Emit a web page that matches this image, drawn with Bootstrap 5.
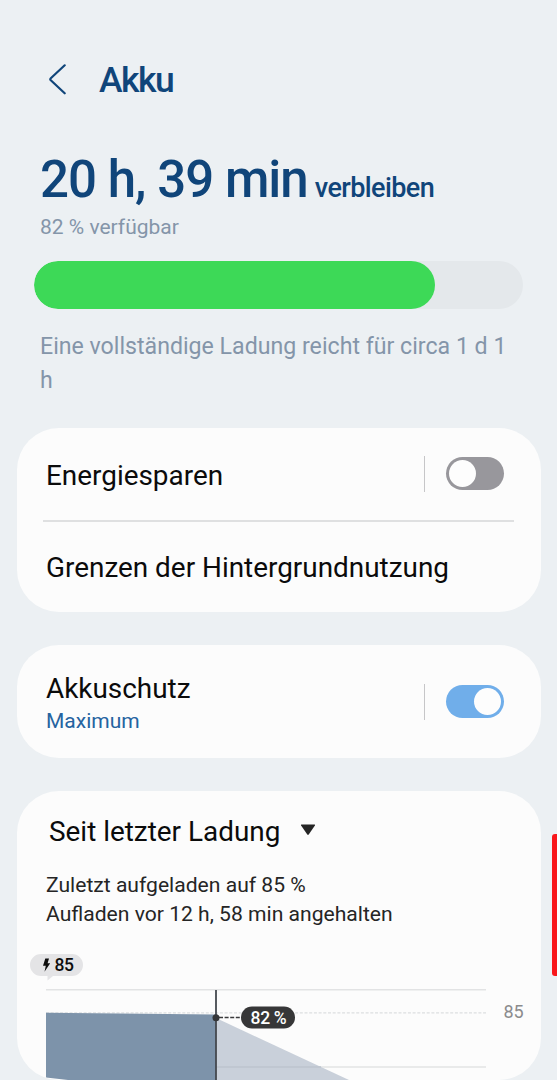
<!DOCTYPE html>
<html lang="de">
<head>
<meta charset="utf-8">
<meta name="viewport" content="width=device-width, initial-scale=1">
<title>Akku</title>
<link href="https://cdn.jsdelivr.net/npm/bootstrap@5.3.0/dist/css/bootstrap.min.css" rel="stylesheet">
<style>
body{background:#ecf0f3;font-family:Roboto,"Liberation Sans",sans-serif;color:#0b0b0b;height:1080px;overflow:hidden}
.navy{color:#10457a}
.slate{color:#8495a9}
.top-bar{height:152px;padding:8px 0 0 48px}
.page-title{font-size:35.5px;font-weight:500;letter-spacing:-1.5px;line-height:40px;margin-left:32px}
.summary{height:276px;padding-left:40px}
.remaining{font-size:51px;font-weight:500;line-height:56px;white-space:nowrap;height:62px;letter-spacing:-.98px}
.remaining span{font-size:27px;letter-spacing:-.6px;margin-left:7px}
.available{font-size:21px;line-height:26px}
.level{height:48px;width:489px;margin:21px 0 0 -6px;border-radius:24px;background:#e4e8eb}
.level .progress-bar{border-radius:24px;background:#3dd957}
.estimate{font-size:23.15px;line-height:34px;margin-top:21px;width:480px}
.panel{background:#fcfcfc;border:0;border-radius:42px;margin:0 16px 33px 17px;overflow:hidden}
.entry{padding:0 37px 0 29px}
.entry-title{font-size:27.9px;line-height:34px}
.rule{height:2px;background:#dfe0e1;margin:0 27px 0 26px}
.split{width:1px;height:36px;background:#c6c6c8;margin-right:21px}
.toggle{width:58px;height:33px;border-radius:17px;background:#98979c;padding:3px}
.toggle i{width:27px;height:27px;border-radius:50%;background:#fdfdfd}
.toggle.active{background:#70aeea}
.sub{font-size:21px;line-height:26px;margin-top:2px;color:#2563a0}
.info{font-size:21.1px;line-height:29px;color:#252525;padding-left:29px}
.scroll-mark{right:0;top:834px;width:5px;height:142px;background:#f9171b;border-radius:3px 0 0 3px}
</style>
</head>
<body>
<header class="top-bar d-flex align-items-center navy">
  <svg width="19" height="32" viewBox="0 0 19 32" fill="none" stroke="currentColor" stroke-width="2.2" stroke-linecap="round" stroke-linejoin="round"><path d="M16.7 1.3 2.8 14.2Q1.8 15.2 2.8 16.2L16.7 29.3"/></svg>
  <h1 class="page-title mb-0">Akku</h1>
</header>
<section class="summary">
  <div class="remaining navy">20 h, 39 min<span>verbleiben</span></div>
  <div class="available slate">82 % verfügbar</div>
  <div class="progress level"><div class="progress-bar" style="width:82.1%"></div></div>
  <p class="estimate slate mb-0">Eine vollständige Ladung reicht für circa 1 d 1 h</p>
</section>
<main>
  <section class="card panel">
    <div class="entry d-flex align-items-center" style="height:92px">
      <div class="entry-title me-auto pt-1">Energiesparen</div>
      <span class="split"></span>
      <span class="toggle d-flex" style="margin-bottom:2px"><i></i></span>
    </div>
    <div class="rule"></div>
    <div class="entry d-flex align-items-center" style="height:90px"><div class="entry-title" style="padding-top:2px">Grenzen der Hintergrundnutzung</div></div>
  </section>
  <section class="card panel">
    <div class="entry d-flex align-items-center" style="height:113px">
      <div class="me-auto" style="padding-top:2px"><div class="entry-title">Akkuschutz</div><div class="sub">Maximum</div></div>
      <span class="split"></span>
      <span class="toggle active d-flex justify-content-end"><i></i></span>
    </div>
  </section>
  <section class="card panel mb-0" style="height:289px">
    <div class="d-flex align-items-center" style="height:79px;padding-left:32px">
      <div class="entry-title" style="padding-top:3px">Seit letzter Ladung</div>
      <svg width="16" height="12" viewBox="0 0 16 12" style="margin:0 0 2px 20px"><path d="M1.5.5h13q1 0 .4.9L8.7 10.6q-.7.9-1.4 0L1.1 1.4Q.6.5 1.5.5Z" fill="#252525"/></svg>
    </div>
    <div class="info">Zuletzt aufgeladen auf 85 %<br>Aufladen vor 12 h, 58 min angehalten</div>
    <svg class="mt-auto flex-shrink-0" width="524" height="140" viewBox="17 940 524 140" font-family="Roboto, sans-serif">
      <path d="M46 989.8H486M46 1067H486" stroke="#e2e3e4" stroke-width="1.6"/>
      <path d="M46 1012.8H486" stroke="#dcdee0" stroke-width="1.2" stroke-dasharray="3 1.7"/>
      <path d="M46 1012.8 216 1014.5V1080H68L46 1077.5Z" fill="#7d93aa"/>
      <path d="M216 1018 349 1080H216Z" fill="#c9d0da"/>
      <path d="M216 1067H321" stroke="#bdc5ce" stroke-width="1.6"/>
      <path d="M216 990V1080" stroke="#44494f" stroke-width="1.8"/>
      <path d="M219 1017.5H242" stroke="#3a3a3c" stroke-width="1.6" stroke-dasharray="4 1.6"/>
      <circle cx="216" cy="1017.8" r="3.5" fill="#353638"/>
      <rect x="241" y="1006.5" width="54" height="22" rx="11" fill="#373738"/>
      <text x="250.5" y="1024" font-size="17.5" letter-spacing="-.3" font-weight="500" fill="#fff">82 %</text>
      <path d="M41 954H72a11 11 0 0 1 0 22H53L47.5 980.5V976H41a11 11 0 0 1 0-22Z" fill="#e4e4e6"/>
      <path d="M45.3 958.5H49L47.6 963.2H50.2L44.5 971.8 45.8 965.8H43Z" fill="#0d0d0d"/>
      <text x="54.6" y="971.4" font-size="17.5" letter-spacing="-.5" font-weight="500" fill="#0d0d0d">85</text>
      <text x="503.5" y="1018" font-size="18" fill="#8b8b8d">85</text>
    </svg>
  </section>
</main>
<div class="scroll-mark position-fixed"></div>
<script src="https://cdn.jsdelivr.net/npm/bootstrap@5.3.0/dist/js/bootstrap.bundle.min.js"></script>
</body>
</html>
